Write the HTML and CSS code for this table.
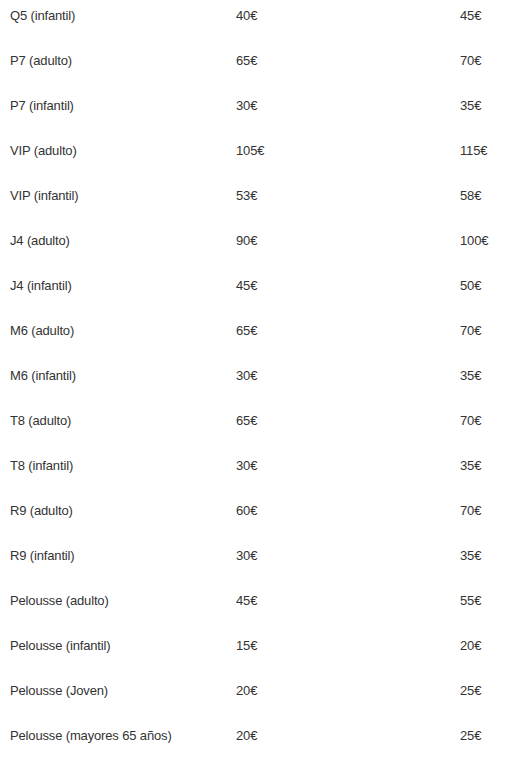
FILE: index.html
```html
<!DOCTYPE html>
<html lang="es">
<head>
<meta charset="utf-8">
<title>Precios</title>
<link rel="stylesheet" href="styles.css">
</head>
<body>
<div class="prices">
  <div class="row"><span>Q5 (infantil)</span><span>40€</span><span>45€</span></div>
  <div class="row"><span>P7 (adulto)</span><span>65€</span><span>70€</span></div>
  <div class="row"><span>P7 (infantil)</span><span>30€</span><span>35€</span></div>
  <div class="row"><span>VIP (adulto)</span><span>105€</span><span>115€</span></div>
  <div class="row"><span>VIP (infantil)</span><span>53€</span><span>58€</span></div>
  <div class="row"><span>J4 (adulto)</span><span>90€</span><span>100€</span></div>
  <div class="row"><span>J4 (infantil)</span><span>45€</span><span>50€</span></div>
  <div class="row"><span>M6 (adulto)</span><span>65€</span><span>70€</span></div>
  <div class="row"><span>M6 (infantil)</span><span>30€</span><span>35€</span></div>
  <div class="row"><span>T8 (adulto)</span><span>65€</span><span>70€</span></div>
  <div class="row"><span>T8 (infantil)</span><span>30€</span><span>35€</span></div>
  <div class="row"><span>R9 (adulto)</span><span>60€</span><span>70€</span></div>
  <div class="row"><span>R9 (infantil)</span><span>30€</span><span>35€</span></div>
  <div class="row"><span>Pelousse (adulto)</span><span>45€</span><span>55€</span></div>
  <div class="row"><span>Pelousse (infantil)</span><span>15€</span><span>20€</span></div>
  <div class="row"><span>Pelousse (Joven)</span><span>20€</span><span>25€</span></div>
  <div class="row"><span>Pelousse (mayores 65 años)</span><span>20€</span><span>25€</span></div>
</div>
</body>
</html>
```
FILE: styles.css
```css
html, body {
  margin: 0;
  padding: 0;
  background: #ffffff;
}
body {
  font-family: "Liberation Sans", Arial, sans-serif;
  font-size: 13px;
  color: #333333;
  letter-spacing: -0.15px;
}
.prices {
  padding: 8px 0 0 10px;
}
.row {
  display: grid;
  grid-template-columns: 226px 224px 1fr;
  line-height: 16px;
  height: 45px;
}
```
